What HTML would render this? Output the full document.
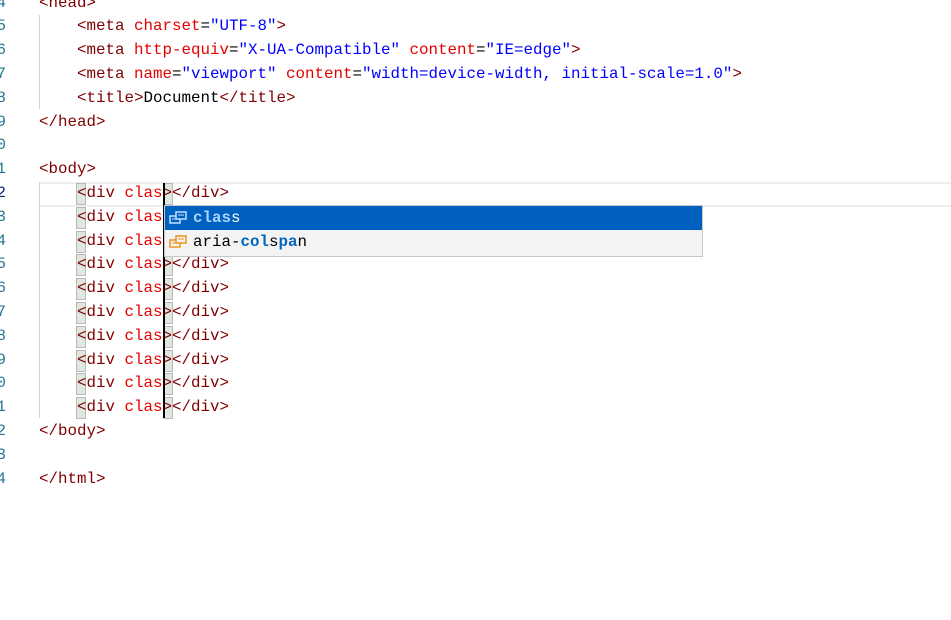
<!DOCTYPE html>
<html><head><meta charset="utf-8"><style>
body{margin:0;width:951px;height:620px;background:#fff;overflow:hidden;position:relative;font-family:"Liberation Mono",monospace;font-size:15.83px}
.ln{position:absolute;left:-14px;width:20px;text-align:right;color:#237893;height:23.8px;line-height:23.8px}
.l{position:absolute;left:39px;height:23.8px;line-height:23.8px;white-space:pre;color:#000}
.t{color:#800000}.a{color:#e50000}.v{color:#0000ff}
.g{position:absolute;width:1px;background:#d3d3d3}
.b{position:absolute;width:8px;height:20px;background:#dfe8df;border:1px solid #b9b9b9}
.cur{position:absolute;left:163px;width:2px;background:#000}
.pop{position:absolute;left:164px;top:205px;width:537px;height:50px;border:1px solid #c8c8c8;background:#f3f3f3;font-size:15.83px}
.row{height:24px;line-height:24px;padding-left:28px;position:relative;white-space:pre}
.sel{background:#0060c0;color:#fff}
.ic{position:absolute;left:4px;top:5px}
</style></head><body>
<div style="position:absolute;left:39px;right:0;top:182px;height:21px;border-top:2px solid #eee;border-bottom:2px solid #eee"></div>
<div class="g" style="left:39px;top:15px;height:94px"></div>
<div class="g" style="left:39px;top:182px;height:236px"></div>

<div class="ln" style="top:-8.4px">4</div><div class="l" style="top:-8.4px"><span class="t">&lt;head&gt;</span></div>
<div class="ln" style="top:15.4px">5</div><div class="l" style="top:15.4px">    <span class="t">&lt;meta</span> <span class="a">charset</span>=<span class="v">"UTF-8"</span><span class="t">&gt;</span></div>
<div class="ln" style="top:39.2px">6</div><div class="l" style="top:39.2px">    <span class="t">&lt;meta</span> <span class="a">http-equiv</span>=<span class="v">"X-UA-Compatible"</span> <span class="a">content</span>=<span class="v">"IE=edge"</span><span class="t">&gt;</span></div>
<div class="ln" style="top:63px">7</div><div class="l" style="top:63px">    <span class="t">&lt;meta</span> <span class="a">name</span>=<span class="v">"viewport"</span> <span class="a">content</span>=<span class="v">"width=device-width, initial-scale=1.0"</span><span class="t">&gt;</span></div>
<div class="ln" style="top:86.8px">8</div><div class="l" style="top:86.8px">    <span class="t">&lt;title&gt;</span>Document<span class="t">&lt;/title&gt;</span></div>
<div class="ln" style="top:110.6px">9</div><div class="l" style="top:110.6px"><span class="t">&lt;/head&gt;</span></div>
<div class="ln" style="top:134.4px">0</div>
<div class="ln" style="top:158.2px">1</div><div class="l" style="top:158.2px"><span class="t">&lt;body&gt;</span></div>

<div class="ln" style="top:182px;color:#0b216f">2</div>
<div class="ln" style="top:205.8px">3</div>
<div class="ln" style="top:229.6px">4</div>
<div class="ln" style="top:253.4px">5</div>
<div class="ln" style="top:277.2px">6</div>
<div class="ln" style="top:301px">7</div>
<div class="ln" style="top:324.8px">8</div>
<div class="ln" style="top:348.6px">9</div>
<div class="ln" style="top:372.4px">0</div>
<div class="ln" style="top:396.2px">1</div>

<div class="b" style="left:76px;top:183px"></div><div class="b" style="left:163px;top:183px"></div>
<div class="b" style="left:76px;top:206.8px"></div>
<div class="b" style="left:76px;top:230.6px"></div>
<div class="b" style="left:76px;top:254.4px"></div><div class="b" style="left:163px;top:254.4px"></div>
<div class="b" style="left:76px;top:278.2px"></div><div class="b" style="left:163px;top:278.2px"></div>
<div class="b" style="left:76px;top:302px"></div><div class="b" style="left:163px;top:302px"></div>
<div class="b" style="left:76px;top:325.8px"></div><div class="b" style="left:163px;top:325.8px"></div>
<div class="b" style="left:76px;top:349.6px"></div><div class="b" style="left:163px;top:349.6px"></div>
<div class="b" style="left:76px;top:373.4px"></div><div class="b" style="left:163px;top:373.4px"></div>
<div class="b" style="left:76px;top:397.2px"></div><div class="b" style="left:163px;top:397.2px"></div>

<div class="l" style="top:182px">    <span class="t">&lt;div</span> <span class="a">clas</span><span class="t">&gt;&lt;/div&gt;</span></div>
<div class="l" style="top:205.8px">    <span class="t">&lt;div</span> <span class="a">clas</span></div>
<div class="l" style="top:229.6px">    <span class="t">&lt;div</span> <span class="a">clas</span></div>
<div class="l" style="top:253.4px">    <span class="t">&lt;div</span> <span class="a">clas</span><span class="t">&gt;&lt;/div&gt;</span></div>
<div class="l" style="top:277.2px">    <span class="t">&lt;div</span> <span class="a">clas</span><span class="t">&gt;&lt;/div&gt;</span></div>
<div class="l" style="top:301px">    <span class="t">&lt;div</span> <span class="a">clas</span><span class="t">&gt;&lt;/div&gt;</span></div>
<div class="l" style="top:324.8px">    <span class="t">&lt;div</span> <span class="a">clas</span><span class="t">&gt;&lt;/div&gt;</span></div>
<div class="l" style="top:348.6px">    <span class="t">&lt;div</span> <span class="a">clas</span><span class="t">&gt;&lt;/div&gt;</span></div>
<div class="l" style="top:372.4px">    <span class="t">&lt;div</span> <span class="a">clas</span><span class="t">&gt;&lt;/div&gt;</span></div>
<div class="l" style="top:396.2px">    <span class="t">&lt;div</span> <span class="a">clas</span><span class="t">&gt;&lt;/div&gt;</span></div>
<div class="cur" style="top:183px;height:235px"></div>

<div class="ln" style="top:420px">2</div><div class="l" style="top:420px"><span class="t">&lt;/body&gt;</span></div>
<div class="ln" style="top:443.8px">3</div>
<div class="ln" style="top:467.6px">4</div><div class="l" style="top:467.6px"><span class="t">&lt;/html&gt;</span></div>

<div class="pop">
<div class="row sel"><svg class="ic" width="18" height="14" viewBox="0 0 18 14"><rect x="1" y="5" width="10" height="7" fill="#0060c0" stroke="#bfe0ff" stroke-width="1.5"/><line x1="3" y1="8" x2="9" y2="8" stroke="#bfe0ff"/><rect x="7" y="1" width="10" height="7" fill="#0060c0" stroke="#bfe0ff" stroke-width="1.5"/><line x1="9" y1="4" x2="15" y2="4" stroke="#bfe0ff"/></svg><b style="color:#a8d4ff">clas</b>s</div>
<div class="row" style="color:#000"><svg class="ic" width="18" height="14" viewBox="0 0 18 14"><rect x="1" y="5" width="10" height="7" fill="#f3f3f3" stroke="#e8961e" stroke-width="1.5"/><line x1="3" y1="8" x2="9" y2="8" stroke="#e8961e"/><rect x="7" y="1" width="10" height="7" fill="#f3f3f3" stroke="#e8961e" stroke-width="1.5"/><line x1="9" y1="4" x2="15" y2="4" stroke="#e8961e"/></svg>aria-<b style="color:#0066bf">col</b>s<b style="color:#0066bf">pa</b>n</div>
</div>
</body></html>
